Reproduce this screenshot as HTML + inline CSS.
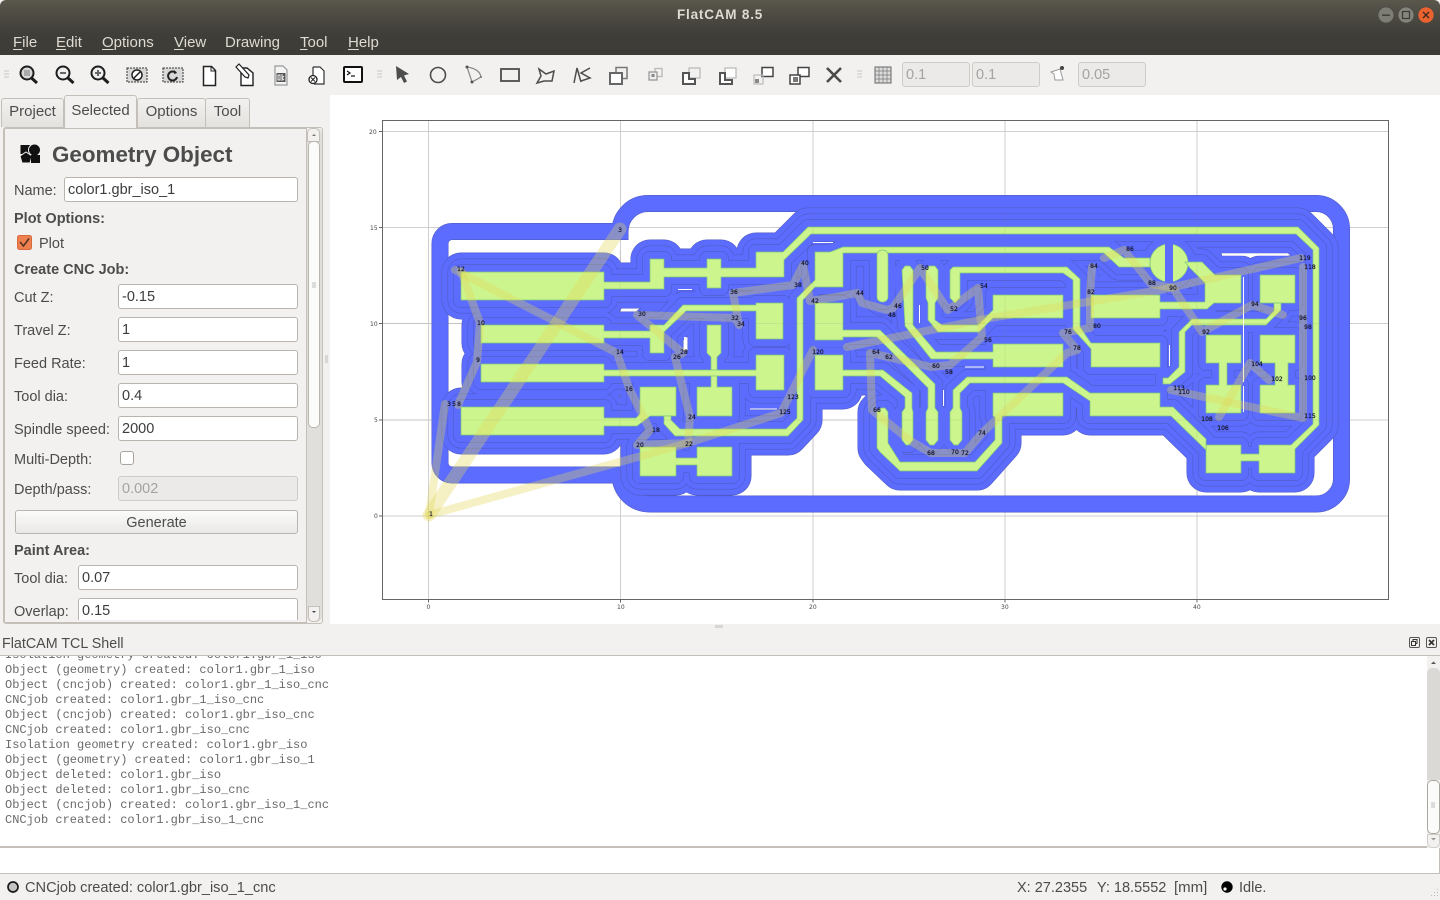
<!DOCTYPE html>
<html><head><meta charset="utf-8"><title>FlatCAM 8.5</title>
<style>
html,body{margin:0;padding:0;width:1440px;height:900px;overflow:hidden;background:#f2f1ef;font-family:"Liberation Sans",sans-serif;font-size:14.5px;color:#4c4c4c}
.a{position:absolute;white-space:pre}
.t{position:absolute;white-space:pre;line-height:22px;height:22px}
.b{font-weight:bold}
.i{position:absolute;box-sizing:border-box;background:#fff;border:1px solid #b9b5ae;border-radius:3px;padding-left:3px;line-height:25px;color:#3c3c3c;font-size:14.5px;white-space:pre;overflow:hidden}
.d{background:#ebeae8;color:#a3a3a3;border-color:#cfccc7}
.m{position:absolute;top:33px;line-height:20px;color:#dfdbd2;font-size:15px}
.m u{text-underline-offset:2px}
.tab{position:absolute;box-sizing:border-box;border:1px solid #c4c0b9;border-bottom:none;border-radius:3px 3px 0 0;background:linear-gradient(#f2f1ef,#e4e2df);text-align:center;line-height:26px;color:#4c4c4c;font-size:15px}
.l{position:absolute;left:5px;font-family:"Liberation Mono",monospace;font-size:12px;line-height:15px;color:#6a6a6a;white-space:pre}
</style></head><body>
<div class="a" style="left:0;top:0;width:1440px;height:55px;background:linear-gradient(#5a574d 0,#4b4941 18px,#3f3e39 34px,#3d3c37 55px);border-radius:6px 6px 0 0"></div>
<div class="a" style="left:677px;top:6px;line-height:18px;font-weight:bold;font-size:13.5px;color:#dfdbd2;letter-spacing:.8px">FlatCAM 8.5</div>
<svg class="a" style="left:1370px;top:0" width="70" height="30">
<circle cx="16" cy="15" r="8" fill="#7d7c75" stroke="#4a4943" stroke-width=".8"/><rect x="12" y="14.5" width="8" height="1.4" fill="#3a3a36"/>
<circle cx="36" cy="15" r="8" fill="#84837c" stroke="#4a4943" stroke-width=".8"/><rect x="32.5" y="11.5" width="7" height="7" fill="none" stroke="#3a3a36" stroke-width="1.2"/>
<circle cx="56" cy="15" r="8" fill="#e9622f" stroke="#4a4943" stroke-width=".6"/><path d="M53 12l6 6M59 12l-6 6" stroke="#3a2a20" stroke-width="1.3"/>
</svg>
<div class="m" style="left:13px"><u>F</u>ile</div><div class="m" style="left:56px"><u>E</u>dit</div><div class="m" style="left:102px"><u>O</u>ptions</div><div class="m" style="left:174px"><u>V</u>iew</div><div class="m" style="left:225px">Drawing</div><div class="m" style="left:300px"><u>T</u>ool</div><div class="m" style="left:348px"><u>H</u>elp</div>

<!-- toolbar icons -->
<svg class="a" style="left:0;top:55px" width="1100" height="40" fill="none">
<g stroke="#c9c7c2"><path d="M4 16h5M4 19h5M4 22h5"/><path d="M377 16h5M377 19h5M377 22h5"/><path d="M857 16h5M857 19h5M857 22h5"/></g>
<g stroke="#1d1d1d" stroke-width="2">
<circle cx="27" cy="18" r="6.500" fill="#d8d8d8"/><path d="M31.5 23l5.500 5" stroke-width="3"/><rect x="24" y="15" width="6" height="6" fill="#aaa" stroke="none"/>
<circle cx="63" cy="18" r="6.500" fill="#efefef"/><path d="M68 23l5.500 5" stroke-width="3"/><path d="M60 18h6" stroke="#666"/>
<circle cx="98" cy="18" r="6.500" fill="#efefef"/><path d="M103 23l5.500 5" stroke-width="3"/><path d="M95 18h6M98 15v6" stroke="#666"/>
</g>
<g>
<rect x="127" y="13" width="20" height="14" fill="#d8d8d8" stroke="#333" stroke-dasharray="2 1"/><circle cx="137" cy="20" r="5" fill="#fff" stroke="#222" stroke-width="1.5"/><path d="M134 23l6-6" stroke="#222" stroke-width="1.5"/>
<rect x="163" y="13" width="20" height="14" fill="#d8d8d8" stroke="#333" stroke-dasharray="2 1"/><path d="M176 18a4.500 4.500 0 1 0 1 4" stroke="#222" stroke-width="2"/><path d="M174 15l3 3-3 1" fill="#222"/>
<path d="M203.500 11.500h8l4 4v15h-12z" fill="#fff" stroke="#222" stroke-width="1.500"/><path d="M211 11.500v4.500h4.500" stroke="#222"/>
<path d="M241 13h6l6 5v12.500h-12z" fill="#fff" stroke="#222" stroke-width="1.400"/><path d="M236 12l3-3 10 11-1 3-3-1z" fill="#fff" stroke="#222" stroke-width="1.200"/>
<path d="M275 11h8l4 4v15h-12z" fill="#f4f4f4" stroke="#999" stroke-width="1.200"/><rect x="276.500" y="18" width="9" height="9" fill="#555"/><path d="M278 20v5h2v-5zM282 19v7M284 21l-2 2 2 2" stroke="#eee"/>
<path d="M313 12h7l4 4v13h-10" fill="#fff" stroke="#333" stroke-width="1.200"/><path d="M313 12v10" stroke="#333" stroke-width="1.200"/><circle cx="313" cy="24.500" r="4" fill="#fff" stroke="#222" stroke-width="1.300"/><path d="M311 22.500l4 4M315 22.500l-4 4" stroke="#222"/>
<rect x="344" y="12" width="18" height="15" rx="1" fill="#fff" stroke="#111" stroke-width="2"/><path d="M347 16l3 2-3 2" stroke="#111" stroke-width="1.200"/><path d="M351 21h4" stroke="#111" stroke-width="1.200"/>
<path d="M396 11l13 8-5 1.500 3 6-3 1.500-3-6-4 3z" fill="#4d4d4d"/>
<circle cx="438" cy="20" r="7.500" stroke="#4d4d4d" stroke-width="1.600"/>
<path d="M467 12c7 1 13 4 14 10L472 27L467 12" stroke="#888" stroke-width="1.200"/><circle cx="467" cy="12" r="1.500" fill="#555"/><circle cx="472" cy="27" r="1.500" fill="#555"/><circle cx="481" cy="22" r="1" fill="#777"/>
<rect x="501" y="14" width="18" height="12" stroke="#4d4d4d" stroke-width="1.800"/>
<path d="M539 14l7 5 8-3-2 10h-8l-7 2 4-7z" stroke="#4d4d4d" stroke-width="1.500"/>
<path d="M574 28l3-15 4 14M590 13l-9 5 9 5-9 3" stroke="#4d4d4d" stroke-width="1.500"/>
<rect x="616" y="12.500" width="11" height="11" stroke="#777" stroke-width="1.500"/><rect x="610" y="18" width="12" height="11" fill="#fff" stroke="#666" stroke-width="2"/>
<rect x="655" y="13.500" width="7" height="8" stroke="#b9b9b9" stroke-width="1.300"/><rect x="649" y="17" width="8" height="8" fill="#eee" stroke="#999" stroke-width="1.300"/><rect x="651.500" y="19" width="3" height="3" fill="#888"/>
<rect x="689" y="13" width="11" height="10" stroke="#bbb" stroke-width="1.300"/><path d="M683 18h6v6h6v5h-12z" fill="#fff" stroke="#555" stroke-width="2"/>
<rect x="725" y="13" width="11" height="10" fill="#fff" stroke="#bbb" stroke-width="1.300"/><path d="M720 18h5v7h7v4h-12z" fill="#fff" stroke="#555" stroke-width="2"/>
<rect x="762" y="12.500" width="11" height="9" fill="#fff" stroke="#444" stroke-width="1.500"/><rect x="754" y="20" width="9" height="9" stroke="#bbb" stroke-width="1.200"/><rect x="755" y="24" width="4" height="4" fill="#888"/>
<rect x="798" y="12.500" width="11" height="9" fill="#fff" stroke="#444" stroke-width="1.500"/><rect x="790" y="20" width="10" height="9" fill="#fff" stroke="#444" stroke-width="1.500"/><rect x="793" y="22" width="5" height="5" fill="#777"/>
<path d="M827 13l14 14M841 13l-14 14" stroke="#4a4a4a" stroke-width="2.600"/>
<rect x="875" y="12" width="16" height="16" fill="#dcdcdc" stroke="#666"/><path d="M879 12v16M883 12v16M887 12v16M875 16h16M875 20h16M875 24h16" stroke="#777" stroke-width=".7"/>
<path d="M1051 17l9-3 3 11-8 0-1-6z" stroke="#999" fill="#fff"/><circle cx="1062" cy="13" r="2" fill="#444"/>
</g>
</svg>
<div class="i d" style="left:902px;top:62px;width:68px;height:25px">0.1</div>
<div class="i d" style="left:972px;top:62px;width:68px;height:25px">0.1</div>
<div class="i d" style="left:1078px;top:62px;width:68px;height:25px">0.05</div>

<!-- canvas bg -->
<div class="a" style="left:330px;top:95px;width:1110px;height:529px;background:#fff"></div>

<!-- tabs -->
<div class="a" style="left:3px;top:127px;width:320px;height:497px;box-sizing:border-box;border:1px solid #c4c0b9;border-radius:3px"></div>
<div class="a" style="left:4px;top:128px;width:303px;height:495px;box-sizing:border-box;border:1px solid #c4c0b9;border-width:0 1px 1px 1px"></div>
<div class="a" style="left:4px;top:128px;width:303px;height:1px;background:#c4c0b9"></div>
<div class="tab" style="left:1px;top:98px;width:63px;height:29px">Project</div>
<div class="tab" style="left:137px;top:98px;width:69px;height:29px">Options</div>
<div class="tab" style="left:205px;top:98px;width:45px;height:29px">Tool</div>
<div class="tab" style="left:64px;top:95px;width:73px;height:33px;background:#f2f1ef;line-height:29px;border-color:#c4c0b9">Selected</div>

<svg class="a" style="left:19px;top:143px" width="24" height="22"><rect x="1.500" y="2" width="11" height="9" fill="#111"/><circle cx="15.500" cy="7" r="6" fill="#111" stroke="#f2f1ef"/><path d="M7 9l6 4-2 7H3l-2-7z" fill="#111" stroke="#f2f1ef"/><rect x="12" y="12" width="9" height="8" fill="#111"/></svg>
<div class="a b" style="left:52px;top:141px;font-size:22.400px;line-height:28px;color:#4c4c4c">Geometry Object</div>
<div class="t" style="left:14px;top:180px">Name:</div><div class="i" style="left:64px;top:177px;width:234px;height:25px">color1.gbr_iso_1</div>
<div class="t b" style="left:14px;top:208px">Plot Options:</div>
<svg class="a" style="left:17px;top:235px" width="16" height="16"><rect x=".5" y=".5" width="14" height="14" rx="2" fill="#ee8050" stroke="#d9693a"/><path d="M3 7l3.500 4L12 3.500" fill="none" stroke="#553322" stroke-width="1.600"/></svg>
<div class="t" style="left:39px;top:233px">Plot</div>
<div class="t b" style="left:14px;top:259px">Create CNC Job:</div>
<div class="t" style="left:14px;top:287px">Cut Z:</div><div class="i" style="left:118px;top:284px;width:180px;height:25px">-0.15</div>
<div class="t" style="left:14px;top:320px">Travel Z:</div><div class="i" style="left:118px;top:317px;width:180px;height:25px">1</div>
<div class="t" style="left:14px;top:353px">Feed Rate:</div><div class="i" style="left:118px;top:350px;width:180px;height:25px">1</div>
<div class="t" style="left:14px;top:386px">Tool dia:</div><div class="i" style="left:118px;top:383px;width:180px;height:25px">0.4</div>
<div class="t" style="left:14px;top:419px">Spindle speed:</div><div class="i" style="left:118px;top:416px;width:180px;height:25px">2000</div>
<div class="t" style="left:14px;top:449px">Multi-Depth:</div><div class="a" style="left:120px;top:451px;width:14px;height:14px;box-sizing:border-box;background:#fff;border:1px solid #a8a59f;border-radius:3px"></div>
<div class="t" style="left:14px;top:479px">Depth/pass:</div><div class="i d" style="left:118px;top:476px;width:180px;height:25px">0.002</div>
<div class="a" style="left:15px;top:510px;width:283px;height:24px;box-sizing:border-box;border:1px solid #b9b5ae;border-radius:3px;background:linear-gradient(#fbfbfa,#e9e8e6);text-align:center;line-height:24px">Generate</div>
<div class="t b" style="left:14px;top:540px">Paint Area:</div>
<div class="t" style="left:14px;top:568px">Tool dia:</div><div class="i" style="left:78px;top:565px;width:220px;height:25px">0.07</div>
<div class="t" style="left:14px;top:601px;height:19px;overflow:hidden">Overlap:</div><div class="i" style="left:78px;top:598px;width:220px;height:22px;border-bottom:none;border-radius:3px 3px 0 0">0.15</div>
<!-- left scrollbar -->
<div class="a" style="left:307px;top:128px;width:15px;height:494px;background:#e0dfdc;border-radius:6px"></div>
<div class="a" style="left:307px;top:128px;width:13px;height:14px;box-sizing:border-box;background:#f2f1ef;border:1px solid #c4c0b9;border-radius:5px 5px 0 0"></div>
<div class="a" style="left:308px;top:141px;width:12px;height:287px;box-sizing:border-box;background:#fbfbfa;border:1px solid #b9b5ae;border-radius:5px"></div>
<div class="a" style="left:308px;top:606px;width:12px;height:16px;box-sizing:border-box;background:#f2f1ef;border:1px solid #c4c0b9;border-radius:0 0 5px 5px"></div>
<svg class="a" style="left:308px;top:128px" width="12" height="494"><path d="M4 8l2-2 2 2z" fill="#777"/><path d="M4 483l2 2 2-2z" fill="#444"/><path d="M4 155h4M4 157h4M4 159h4" stroke="#aaa" stroke-width=".7"/></svg>

<!-- plot -->
<svg class="a" style="left:0;top:0" width="1440" height="900" viewBox="0 0 1440 900">
<defs>
<g id="cu" stroke-linejoin="round">
<polygon points="461,272 604,272 604,282 650,282 650,259 664,259 664,268 707,268 707,259 721,259 721,268 756,268 756,252 783,252 808,227 1298,227 1319,248 1319,425 1295,449 1295,473 1259,473 1259,461 1241,461 1241,473 1206,473 1206,445 1241,445 1241,454 1259,454 1259,445 1291,445 1313,424 1313,250 1296,234 811,234 784,260 784,277 721,277 721,288 707,288 707,277 664,277 664,289 604,289 604,300 461,300"/>
<polygon points="481,325 604,325 604,331 650,331 650,325 664,325 683,305 756,305 756,303 783,303 783,339 756,339 756,311 686,311 664,332 664,353 650,353 650,338 604,338 604,343 481,343"/>
<polygon points="707,325 721,325 721,353 717,357 717,387 732,387 732,416 697,416 697,387 711,387 711,357 707,353"/>
<polygon points="481,364 604,364 604,370 756,370 756,355 784,355 784,390 756,390 756,376 604,376 604,382 481,382"/>
<polygon points="461,407 604,407 604,418 636,418 640,414 640,387 676,387 676,416 650,416 637,426 604,426 604,435 461,435"/>
<polygon points="640,447 676,447 676,458 697,458 697,447 732,447 732,476 697,476 697,465 676,465 676,476 640,476"/>
<polygon points="664,416 671,416 671,420 680,429 786,429 797,418 797,298 815,280 815,252 830,252 843,247 1109,247 1124,258 1150,258 1150,267 1119,267 1104,253 843,253 843,287 815,287 803,300 803,420 788,436 675,436 664,424"/>
<circle cx="1169" cy="263" r="19"/>
<polygon points="1185,262 1202,262 1215,275 1241,275 1241,303 1214,303 1207,309 1160,309 1160,318 1091,318 1091,295 1160,295 1160,302 1205,302 1205,283 1190,268"/>
<polygon points="815,303 843,303 843,330 880,330 935,384 935,408 938,412 938,440 934,445 930,445 926,440 926,412 928,408 928,388 877,337 843,337 843,340 815,340"/>
<polygon points="815,355 843,355 843,370 883,370 912,393 912,408 913,412 913,440 909,445 906,445 902,440 902,412 905,408 905,397 880,376 843,376 843,390 815,390"/>
<rect x="877" y="250" width="11" height="52" rx="5"/>
<polygon points="902,270 905,266 910,266 913,270 913,325 936,352 993,352 993,344 1063,344 1063,367 993,367 993,359 931,359 905,326"/>
<polygon points="926,270 929,266 935,266 938,270 938,298 935,303 935,320 942,325 978,325 993,310 993,295 1063,295 1063,318 993,318 979,332 938,332 928,320 928,303 926,298"/>
<polygon points="950,270 953,267 1067,267 1080,279 1080,327 1091,343 1160,343 1160,367 1091,367 1091,349 1073,329 1073,280 1063,273 960,273 960,298 955,303 950,298"/>
<polygon points="950,440 950,412 953,408 953,390 967,377 1067,377 1090,393 1160,393 1160,407 1173,407 1206,439 1206,450 1171,416 1090,416 1090,401 1063,383 970,383 960,393 960,408 962,412 962,440 958,445 954,445"/>
<polygon points="877,412 881,408 885,408 888,412 888,443 900,462 975,462 995,440 995,417 993,416 993,393 1063,393 1063,416 1002,416 1002,443 977,471 900,471 880,452 877,448"/>
<polygon points="1206,335 1241,335 1241,363 1227,363 1227,385 1241,385 1241,413 1206,413 1206,385 1219,385 1219,363 1206,363"/>
<polygon points="1260,335 1295,335 1295,363 1288,363 1288,385 1295,385 1295,413 1260,413 1260,385 1275,385 1275,363 1260,363"/>
<polygon points="1260,275 1295,275 1295,303 1260,303"/>
<polygon points="1179,360 1179,332 1192,319 1266,319 1274,311 1274,303 1281,303 1281,310 1266,325 1192,325 1185,332 1185,372 1170,384 1163,384 1163,378 1168,378 1179,367"/>
</g>
</defs>
<!-- plot frame and grid -->
<g stroke="#cfcfcf" stroke-width="1"><path d="M428.500 120v479M620.500 120v479M813 120v479M1005 120v479M1197 120v479M382 131.500h1007M382 227.500h1007M382 323.500h1007M382 420h1007M382 516h1007"/></g>
<rect x="382.500" y="120.500" width="1006" height="479" fill="none" stroke="#666"/>
<g stroke="#666"><path d="M428.500 599.500v3M620.500 599.500v3M813 599.500v3M1005 599.500v3M1197 599.500v3M379 131.500h3M379 227.500h3M379 323.500h3M379 420h3M379 516h3"/></g>
<g font-family="DejaVu Sans,sans-serif" font-size="6" fill="#444"><text x="369" y="134">20</text><text x="370" y="230">15</text><text x="370" y="326">10</text><text x="374" y="422">5</text><text x="374" y="518">0</text><text x="426.500" y="609">0</text><text x="617" y="609">10</text><text x="809" y="609">20</text><text x="1001" y="609">30</text><text x="1193" y="609">40</text></g>

<!-- outer ring -->
<path d="M620 231.500L452 231.500A12 12 0 0 0 440 243.500L440 463A12 12 0 0 0 452 475L620 475A30 29 0 0 0 650 504L1316 504A25.500 25 0 0 0 1341.500 479L1341.500 229A25.500 25.500 0 0 0 1316 203.500L648 203.500A28 28 0 0 0 620 231.500Z" fill="none" stroke="#505cc4" stroke-width="17"/>
<path d="M620 231.500L452 231.500A12 12 0 0 0 440 243.500L440 463A12 12 0 0 0 452 475L620 475A30 29 0 0 0 650 504L1316 504A25.500 25 0 0 0 1341.500 479L1341.500 229A25.500 25.500 0 0 0 1316 203.500L648 203.500A28 28 0 0 0 620 231.500Z" fill="none" stroke="#5c6cff" stroke-width="15.800"/>

<!-- isolation passes -->
<use href="#cu" fill="#505cc4" stroke="#505cc4" stroke-width="39"/>
<use href="#cu" fill="#5c6cff" stroke="#5c6cff" stroke-width="37.800"/>
<use href="#cu" fill="#505cc4" stroke="#505cc4" stroke-width="27"/>
<use href="#cu" fill="#5c6cff" stroke="#5c6cff" stroke-width="25.800"/>
<use href="#cu" fill="#505cc4" stroke="#505cc4" stroke-width="16"/>
<use href="#cu" fill="#5c6cff" stroke="#5c6cff" stroke-width="14.800"/>
<use href="#cu" fill="#cdf58d" stroke="#7cc77a" stroke-width=".7"/>
<!-- blue cuts on copper -->
<path d="M1169 238V290" stroke="#5c6cff" stroke-width="8"/>
<!-- white slivers -->
<g stroke="#fff" stroke-width="1" fill="none">
<path d="M1243.500 277V382M1243.500 386V412"/><path d="M1222 254.500H1288" stroke-width="2.500"/><path d="M1169.500 345V366"/>
<path d="M813 242.500H833M678 289.500H692"/><path d="M622 310H635" stroke-width="2"/><path d="M685 337V347" stroke-width="2"/><path d="M750 409H777"/><path d="M919.500 305V323M943.500 390V406M965 367H984"/>
</g>

<!-- travel moves -->
<g fill="none" stroke="rgba(225,215,85,.34)" stroke-linecap="round" stroke-linejoin="round">
<path d="M429 515L620 229" stroke-width="13"/>
<path d="M429 515L445 404" stroke-width="8"/>
<path d="M429 515L688 443L781 413L813 350" stroke-width="8"/>
<path d="M461 271L480 323L477 362L458 405" stroke-width="8"/>
<path d="M455 270L617 353L629 388L650 430L637 445L688 443L690 417L675 357L683 353L637 315L735 318L739 325L733 293L793 285L803 265L810 301L830 298L857 293L862 303L887 310L893 308L920 268L948 310L978 288L982 337L950 365L931 367L888 357L870 353L872 410L912 442L931 453L965 453L982 433L1067 353L1077 350L1063 333L1090 328L1090 293L1092 267" stroke-width="8"/>
<path d="M847 347L990 318L1160 290L1301 258" stroke-width="8"/>
<path d="M1104 258L1124 250L1151 284L1173 288L1202 332L1252 305L1283 315" stroke-width="8"/>
<path d="M1303 267L1303 418L1171 390" stroke-width="8"/>
<path d="M1219 417L1250 363L1269 380" stroke-width="8"/>
</g>
<!-- drill labels -->
<g font-family="DejaVu Sans,sans-serif" font-size="6" fill="#15152a" stroke="#15152a" stroke-width=".2" text-anchor="middle">
<text x="431" y="516">1</text><text x="620" y="232">3</text><text x="461" y="271">12</text><text x="481" y="325">10</text><text x="478" y="362">9</text><text x="449" y="406">3</text><text x="454" y="406">5</text><text x="459" y="406">8</text><text x="620" y="354">14</text><text x="629" y="391">16</text><text x="656" y="432">18</text><text x="640" y="447">20</text><text x="689" y="446">22</text><text x="692" y="419">24</text><text x="677" y="359">26</text><text x="684" y="354">28</text><text x="642" y="316">30</text><text x="734" y="294">36</text><text x="735" y="320">32</text><text x="741" y="326">34</text><text x="798" y="287">38</text><text x="805" y="265">40</text><text x="815" y="303">42</text><text x="860" y="295">44</text><text x="898" y="308">46</text><text x="892" y="317">48</text><text x="925" y="270">50</text><text x="954" y="311">52</text><text x="984" y="288">54</text><text x="988" y="342">56</text><text x="949" y="374">58</text><text x="936" y="368">60</text><text x="889" y="359">62</text><text x="876" y="354">64</text><text x="877" y="412">66</text><text x="931" y="455">68</text><text x="955" y="454">70</text><text x="965" y="455">72</text><text x="982" y="435">74</text><text x="1068" y="334">76</text><text x="1077" y="350">78</text><text x="1097" y="328">80</text><text x="1091" y="294">82</text><text x="1094" y="268">84</text><text x="1130" y="251">86</text><text x="1152" y="285">88</text><text x="1173" y="290">90</text><text x="1206" y="334">92</text><text x="1255" y="306">94</text><text x="1303" y="320">96</text><text x="1308" y="329">98</text><text x="1310" y="380">100</text><text x="1277" y="381">102</text><text x="1257" y="366">104</text><text x="1223" y="430">106</text><text x="1207" y="421">108</text><text x="1184" y="394">110</text><text x="1179" y="390">113</text><text x="1310" y="418">115</text><text x="1310" y="269">118</text><text x="1305" y="260">119</text><text x="818" y="354">120</text><text x="793" y="399">123</text><text x="785" y="414">125</text>
</g>
<!-- grid faint over -->
<g stroke="rgba(120,120,120,.12)"><path d="M1005 212V496M1197 212V496M813 212V496M620 250V480M382 323.500H1340M382 420H1340"/></g>
</svg>
<svg class="a" style="left:324px;top:355px" width="6" height="10"><path d="M1 1h3M1 3h3M1 5h3M1 7h3" stroke="#bbb"/></svg>
<svg class="a" style="left:715px;top:625px" width="10" height="5"><path d="M1 0v3M3 0v3M5 0v3M7 0v3" stroke="#bbb"/></svg>

<!-- shell -->
<div class="a" style="left:2px;top:634px;font-size:14.300px;line-height:20px;color:#4c4c4c">FlatCAM TCL Shell</div>
<svg class="a" style="left:1405px;top:635px" width="32" height="15" fill="none" stroke="#333"><rect x="4.500" y="2.500" width="10" height="10" rx="1.500" stroke="#555"/><rect x="8" y="4.500" width="4" height="4"/><rect x="6.500" y="6.500" width="4" height="4" fill="#f2f1ef"/><rect x="21.500" y="2.500" width="10" height="10" rx="1.500" stroke="#555"/><path d="M24 5l5 5M29 5l-5 5" stroke-width="1.700"/></svg>
<div class="a" style="left:0;top:655px;width:1427px;height:193px;box-sizing:border-box;background:#fff;border-top:1px solid #c4c0b9;border-bottom:2px solid #c4c0b9;overflow:hidden">
<div class="l" style="top:-8px">Isolation geometry created: color1.gbr_1_iso</div>
<div class="l" style="top:7px">Object (geometry) created: color1.gbr_1_iso</div>
<div class="l" style="top:22px">Object (cncjob) created: color1.gbr_1_iso_cnc</div>
<div class="l" style="top:37px">CNCjob created: color1.gbr_1_iso_cnc</div>
<div class="l" style="top:52px">Object (cncjob) created: color1.gbr_iso_cnc</div>
<div class="l" style="top:67px">CNCjob created: color1.gbr_iso_cnc</div>
<div class="l" style="top:82px">Isolation geometry created: color1.gbr_iso</div>
<div class="l" style="top:97px">Object (geometry) created: color1.gbr_iso_1</div>
<div class="l" style="top:112px">Object deleted: color1.gbr_iso</div>
<div class="l" style="top:127px">Object deleted: color1.gbr_iso_cnc</div>
<div class="l" style="top:142px">Object (cncjob) created: color1.gbr_iso_1_cnc</div>
<div class="l" style="top:157px">CNCjob created: color1.gbr_iso_1_cnc</div>
</div>
<div class="a" style="left:1427px;top:655px;width:13px;height:193px;background:#f2f1ef;border-top:1px solid #c4c0b9"></div>
<div class="a" style="left:1427px;top:668px;width:13px;height:112px;background:#dad9d6;border-radius:5px 5px 0 0"></div>
<div class="a" style="left:1427px;top:780px;width:13px;height:54px;box-sizing:border-box;background:#fbfbfa;border:1px solid #a9a6a0;border-radius:5px"></div>
<div class="a" style="left:1427px;top:834px;width:13px;height:14px;box-sizing:border-box;background:#f2f1ef;border:1px solid #d0cdc8;border-radius:0 0 5px 5px"></div>
<svg class="a" style="left:1427px;top:655px" width="13" height="193"><path d="M4 9l2.500-2.500L9 9z" fill="#555"/><path d="M4 183l2.500 2.500L9 183z" fill="#999"/><path d="M4 148h4M4 150h4M4 152h4" stroke="#aaa" stroke-width=".7"/></svg>
<div class="a" style="left:0;top:848px;width:1440px;height:26px;box-sizing:border-box;background:#fff;border-bottom:1px solid #c4c0b9;border-right:1px solid #c4c0b9"></div>

<!-- status -->
<svg class="a" style="left:6px;top:880px" width="14" height="14"><circle cx="7" cy="7" r="5" fill="#c4c4c4" stroke="#1a1a1a" stroke-width="1.700"/></svg>
<div class="a" style="left:25px;top:878px;font-size:14.600px;line-height:20px;color:#4c4c4c">CNCjob created: color1.gbr_iso_1_cnc</div>
<div class="a" style="left:1017px;top:878px;font-size:14.500px;line-height:20px">X: 27.2355</div>
<div class="a" style="left:1097px;top:878px;font-size:14.500px;line-height:20px">Y: 18.5552</div>
<div class="a" style="left:1174px;top:878px;font-size:15px;line-height:20px">[mm]</div>
<svg class="a" style="left:1220px;top:880px" width="14" height="14"><circle cx="7" cy="7" r="5.700" fill="#000"/><circle cx="5" cy="9" r="1.600" fill="#fff"/></svg>
<div class="a" style="left:1239px;top:878px;font-size:14.500px;line-height:20px">Idle.</div>
<svg class="a" style="left:1428px;top:888px" width="12" height="12" fill="#bbb"><rect x="9" y="1" width="1" height="1"/><rect x="6" y="4" width="1" height="1"/><rect x="9" y="4" width="1" height="1"/><rect x="3" y="7" width="1" height="1"/><rect x="6" y="7" width="1" height="1"/><rect x="9" y="7" width="1" height="1"/></svg>
</body></html>
